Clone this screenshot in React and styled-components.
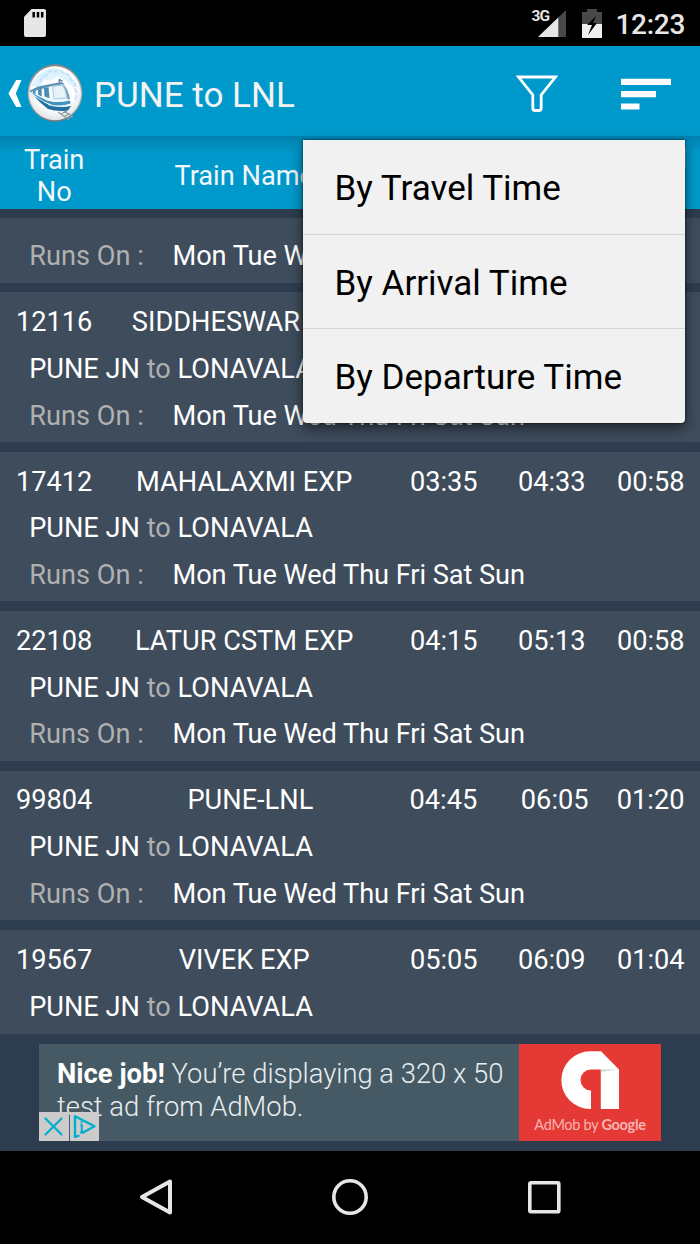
import React from 'react';
import styled, { createGlobalStyle } from 'styled-components';

const Global = createGlobalStyle`
  * { box-sizing: border-box; }
  body { margin: 0; background: #000; }
`;

const Screen = styled.div`
  position: relative;
  width: 700px;
  height: 1244px;
  overflow: hidden;
  display: flex;
  flex-direction: column;
  background: #2d3d4f;
  color: #fff;
  font-family: Roboto, "Liberation Sans", sans-serif;
  font-size: 27.2px;
`;

const StatusBar = styled.header`
  height: 46px;
  flex: none;
  display: flex;
  align-items: center;
  padding: 0 15px 0 24px;
  background: #000;
  color: #e6e6e6;
`;

const StatusRight = styled.div`
  margin-left: auto;
  display: flex;
  align-items: center;
`;

const Clock = styled.span`
  font-size: 28px;
  font-weight: 500;
  line-height: 46px;
  letter-spacing: -0.3px;
  margin: 3px 0 0 13px;
`;

const Network = styled.span`
  align-self: flex-start;
  width: 17px;
  margin: 10px -10px 0 0;
  font-size: 15.5px;
  line-height: 15px;
  font-weight: 700;
  letter-spacing: -0.9px;
`;

const ActionBar = styled.div`
  height: 90px;
  flex: none;
  display: flex;
  align-items: center;
  padding: 4px 29.5px 0 8px;
  background: #0099cc;
`;

const Title = styled.h1`
  margin: 5px 0 0 11px;
  font-size: 35px;
  font-weight: 400;
  line-height: 42px;
  color: #f3f3f3;
`;

const Actions = styled.div`
  margin: 1px 0 0 auto;
  display: flex;
  align-items: center;
  gap: 63px;
`;

const Columns = styled.div`
  display: grid;
  grid-template-columns: ${(p) => (p.$wide ? '108.4px 284px 102px 120.6px 71.4px' : '102.4px 283.6px 115.5px 100.5px 97.5px')};
  text-align: center;
  white-space: nowrap;
  > :first-child { padding-left: ${(p) => (p.$wide ? 0 : 6)}px; }
`;

const TableHead = styled(Columns)`
  height: 73px;
  flex: none;
  align-items: center;
  padding-top: 3px;
  line-height: 32px;
  border-top: 4px solid #0083b2;
  background: linear-gradient(#0087b4, #0099cc 13px);
`;

const HeadCell = styled.div`
  color: #f3f7f9;
  grid-column: ${(p) => p.$column};
`;

const List = styled.main`
  height: 816px;
  flex: none;
  margin-top: 9px;
  overflow: hidden;
`;

const Line = styled.div`
  height: 46.65px;
  padding-left: 29.2px;
  display: flex;
  white-space: pre;
`;

const Card = styled.article`
  height: 149.6px;
  margin-bottom: 9.8px;
  padding-top: 6.9px;
  line-height: 46.65px;
  background: #3e4c5c;
`;

const PartialCard = styled(Card)`
  height: 97.1px;
  margin-top: -32.5px;
  padding-top: 0;
  ${Line}:first-child { height: 47.8px; }
`;

const Muted = styled.span`
  color: #b0b0b0;
`;

const RunsLabel = styled(Muted)`
  width: 143.3px;
`;

const Days = styled.span`
  letter-spacing: -0.06px;
`;

const AdSlot = styled.div`
  height: 117px;
  flex: none;
  padding: 10px 39px;
`;

const Ad = styled.div`
  position: relative;
  height: 97px;
  display: flex;
  background: #455a64;
`;

const AdText = styled.p`
  flex: 1;
  margin: 0;
  padding: 14px 0 0 18px;
  font-size: 27.4px;
  font-weight: 300;
  line-height: 32.5px;
  white-space: nowrap;
  color: #e9edef;
  b { font-weight: 700; color: #fff; }
`;

const AdBrand = styled.div`
  width: 142px;
  display: flex;
  flex-direction: column;
  align-items: center;
  padding-top: 7px;
  background: #e53935;
  font-family: Lato, sans-serif;
  font-size: 14.5px;
  line-height: 20px;
  letter-spacing: -0.3px;
  color: #f6b4b2;
  white-space: nowrap;
  svg { flex: none; margin: 0 0 5px 0; }
  b { font-weight: 700; }
`;

const AdBadges = styled.div`
  position: absolute;
  left: 0;
  bottom: 0;
  display: flex;
  gap: 1px;
`;

const Badge = styled.div`
  width: 29.5px;
  height: 29px;
  background: #ccc;
  svg { display: block; }
`;

const NavBar = styled.nav`
  height: 93px;
  flex: none;
  display: flex;
  justify-content: center;
  align-items: center;
  gap: 156px;
  padding-bottom: 1px;
  background: #000;
`;

const Menu = styled.div`
  position: absolute;
  left: 303px;
  top: 140px;
  width: 382px;
  height: 282.5px;
  background: #f1f1f1;
  border-radius: 0 0 4px 4px;
  box-shadow: 0 0 2px rgba(0, 0, 0, 0.8), 0 5px 13px rgba(0, 0, 0, 0.55);
`;

const MenuItem = styled.div`
  height: 94.6px;
  padding: 4px 0 0 31.5px;
  display: flex;
  align-items: center;
  font-size: 35px;
  color: #000;
  border-bottom: 1.5px solid #d6d6d6;
  &:last-child { height: 93px; border: 0; }
`;

const SdCard = () => (
  <svg width="22" height="30" viewBox="0 0 22 30">
    <path d="M7.5 1H20q2 0 2 2v24q0 2-2 2H2q-2 0-2-2V9z" fill="#e6e6e6" />
    <path d="M9.7 4v5.5M14 4v5.5M18.2 4v5.5" stroke="#000" strokeWidth="2.5" />
  </svg>
);

const Signal = () => (
  <svg width="28" height="29" viewBox="0 0 28 29">
    <path d="M28 1v27H0z" fill="#484848" />
    <path d="M20.3 8.4V28H0z" fill="#e6e6e6" />
  </svg>
);

const Battery = () => (
  <svg width="20" height="29" viewBox="0 0 20 29" style={{ marginLeft: 16 }}>
    <path d="M5 0h10v3h5v12H0V3h5z" fill="#484848" />
    <path d="M0 15h20v14H0z" fill="#efefef" />
    <path d="M14 7L5 16h5l-4 10 9-12h-4z" fill="#000" />
  </svg>
);

const BackArrow = () => (
  <svg width="14" height="29" viewBox="0 0 14 29">
    <path d="M8.2 1H13.5L7.8 14.5 13.5 28H8.2L.4 14.5z" fill="#fff" />
  </svg>
);

const TrainLogo = () => (
  <svg width="56" height="60" viewBox="0 0 56 60" style={{ marginLeft: 5 }}>
    <defs>
      <linearGradient id="rim" x1="0" y1="0" x2="0" y2="1">
        <stop offset="0" stopColor="#858585" />
        <stop offset=".55" stopColor="#b4b8ba" />
        <stop offset="1" stopColor="#777" />
      </linearGradient>
      <radialGradient id="face" cx=".5" cy=".4" r=".6">
        <stop offset=".65" stopColor="#fff" />
        <stop offset="1" stopColor="#dfe3e6" />
      </radialGradient>
    </defs>
    <ellipse cx="28" cy="30" rx="27.3" ry="28.8" fill="url(#rim)" />
    <ellipse cx="28" cy="30.3" rx="26" ry="27" fill="url(#face)" />
    <path d="M5 23C8 12 17 6 27 5l9 3 8 6 6 9-3 2-8-7-8-5-6 4-8 0-5 7z" fill="#e0f2fc" />
    <path d="M14 19q-1-6 5-6 2-7 8-4 7-4 10 2 6-1 7 6 6 3 4 9 3 5 0 11" fill="none" stroke="#c3e5f8" strokeWidth="2.2" strokeDasharray="5 1.5" />
    <path d="M2 28L14 22l21-2q5 1 7 7l2 13-8 7-14-3z" fill="#f3f9fc" />
    <path d="M2 28l9-4.5 23-4.5 4 2-13 2L4 29z" fill="#5d93b6" />
    <path d="M6 28l2.5-.8v4.2l-2.5-1.4zM11 26.5l3.5-.8.3 7.8-3.6-1.7zM17 25l4.5-.8 1 11-5-1.6z" fill="#4b8cb5" />
    <path d="M25.5 23.5l9.5-1.5q4 5 5 13l-13 1z" fill="#e8f2f9" stroke="#9fc3da" strokeWidth=".9" />
    <path d="M36 21q5 5 7 15l-2.5.5q-1-10-5-15z" fill="#6f9fbe" />
    <path d="M2 28.5l18 9 7 1.5q8 .5 16-1.5l.5 3q-9 3-18 1.5L16 38z" fill="#4393c2" />
    <path d="M7 33l12 7.5q11 5 25 2.5l-3 4.5q-11 1.5-20-1.5-7-5-14-13z" fill="#23709f" />
    <path d="M21 41.5q9 3 20 1.5" stroke="#dcebf3" strokeWidth="1.2" fill="none" />
    <path d="M31 49l11 8M37 48l9 6M34 51l6-3M37 53.5l6-3M40 56l6-3" stroke="#8c9aa2" strokeWidth="1.1" />
    <path d="M32 19.5l.5-3 3 2" stroke="#437391" strokeWidth="1.3" fill="none" />
  </svg>
);

const Funnel = () => (
  <svg width="42" height="38" viewBox="0 0 42 38">
    <path d="M2.5 2h37L25.2 20v13q0 2.5-2.2 2.5h-4q-2.2 0-2.2-2.5V20z" fill="none" stroke="#fff" strokeWidth="2.8" />
  </svg>
);

const SortIcon = () => (
  <svg width="50" height="32" viewBox="0 0 50 32">
    <path d="M0 .8h50v6.2H0zM0 13.1h35v6.2H0zM0 25.4h18.5v6.2H0z" fill="#fff" />
  </svg>
);

const AdMobLogo = () => (
  <svg width="59" height="59" viewBox="0 0 59 59">
    <path d="M29.2.3H40L58 18.5V58H39.8V18.5H30a10.5 10.5 0 0 0 0 21V58h-.8A28.85 28.85 0 0 1 29.2.3z" fill="#fff" />
    <path d="M39.8 18.5H58l-18.2 2.4z" fill="#d6d6d6" />
  </svg>
);

const trains = [
  { no: '12116', name: 'SIDDHESWAR EXP', times: ['03:10', '04:08', '00:58'] },
  { no: '17412', name: 'MAHALAXMI EXP', times: ['03:35', '04:33', '00:58'] },
  { no: '22108', name: 'LATUR CSTM EXP', times: ['04:15', '05:13', '00:58'] },
  { no: '99804', name: 'PUNE-LNL', times: ['04:45', '06:05', '01:20'], wide: true },
];

const lastTrain = { no: '19567', name: 'VIVEK EXP', times: ['05:05', '06:09', '01:04'] };

const Summary = ({ train }) => (
  <Columns $wide={train.wide}>
    <span>{train.no}</span>
    <span>{train.name}</span>
    {train.times.map((t, i) => <span key={i}>{t}</span>)}
  </Columns>
);

const Route = () => <Line>PUNE JN <Muted>to</Muted> LONAVALA</Line>;

const RunDays = () => (
  <Line><RunsLabel>Runs On :</RunsLabel><Days>Mon Tue Wed Thu Fri Sat Sun</Days></Line>
);

export default function App() {
  return (
    <Screen>
      <Global />
      <StatusBar>
        <SdCard />
        <StatusRight>
          <Network>3G</Network>
          <Signal />
          <Battery />
          <Clock>12:23</Clock>
        </StatusRight>
      </StatusBar>
      <ActionBar>
        <BackArrow />
        <TrainLogo />
        <Title>PUNE to LNL</Title>
        <Actions>
          <Funnel />
          <SortIcon />
        </Actions>
      </ActionBar>
      <TableHead>
        <HeadCell $column={1}>Train<br />No</HeadCell>
        <HeadCell $column={2}>Train Name</HeadCell>
        <HeadCell $column={5}>Travel<br />Time</HeadCell>
      </TableHead>
      <List>
        <PartialCard>
          <Route />
          <RunDays />
        </PartialCard>
        {trains.map((t) => (
          <Card key={t.no}>
            <Summary train={t} />
            <Route />
            <RunDays />
          </Card>
        ))}
        <Card>
          <Summary train={lastTrain} />
          <Route />
        </Card>
      </List>
      <AdSlot>
        <Ad>
          <AdText><b>Nice job!</b> You’re displaying a 320 x 50<br />test ad from AdMob.</AdText>
          <AdBrand>
            <AdMobLogo />
            <span>AdMob by <b>Google</b></span>
          </AdBrand>
          <AdBadges>
            <Badge>
              <svg width="29" height="29" viewBox="0 0 29 29">
                <path d="M6.5 6.5l16 16M22.5 6.5l-16 16" stroke="#00aecd" strokeWidth="2.2" strokeLinecap="round" />
              </svg>
            </Badge>
            <Badge>
              <svg width="29" height="29" viewBox="0 0 29 29" fill="none" stroke="#00aecd">
                <path d="M8.5 23.8l-3.5 1V4.3l19.5 10L13 20.5" strokeWidth="2.4" strokeLinejoin="round" strokeLinecap="round" />
                <path d="M10.2 13.2h1.6v7M10 20.5h4M11.6 9.3v2" strokeWidth="2" />
              </svg>
            </Badge>
          </AdBadges>
        </Ad>
      </AdSlot>
      <NavBar>
        <svg width="38" height="38" viewBox="0 0 38 38">
          <path d="M33 3.5v31L5 19z" fill="none" stroke="#e6e6e6" strokeWidth="4" strokeLinejoin="round" />
        </svg>
        <svg width="38" height="38" viewBox="0 0 38 38">
          <circle cx="19" cy="19" r="16.2" fill="none" stroke="#e6e6e6" strokeWidth="3.6" />
        </svg>
        <svg width="38" height="38" viewBox="0 0 38 38">
          <rect x="4.8" y="4.8" width="29" height="29" rx="1" fill="none" stroke="#e6e6e6" strokeWidth="3.6" />
        </svg>
      </NavBar>
      <Menu>
        <MenuItem>By Travel Time</MenuItem>
        <MenuItem>By Arrival Time</MenuItem>
        <MenuItem>By Departure Time</MenuItem>
      </Menu>
    </Screen>
  );
}
